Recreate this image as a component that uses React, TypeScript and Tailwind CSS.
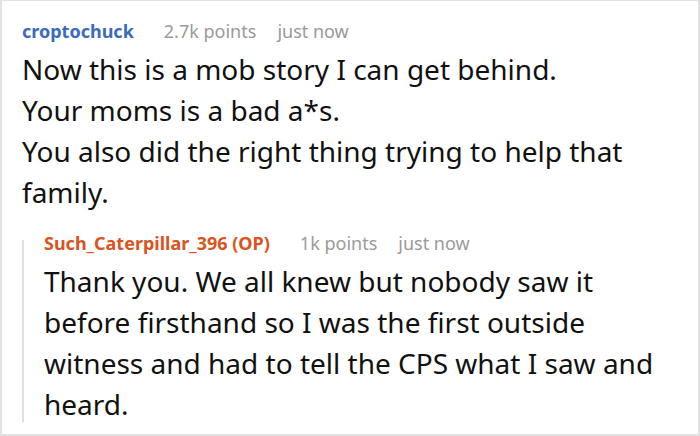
import React from "react";

export default function App() {
  return (
    <div
      className="w-[700px] h-[436px] bg-white border-t border-l-2 border-r-2 border-b-2 border-[#e3e3e3] overflow-hidden"
      style={{ fontFamily: '"Noto Sans", sans-serif' }}
    >
      <div className="pl-[20px] pt-[17px] pr-[20px]">
        <div className="flex items-baseline text-[18px] leading-[26px]">
          <span className="font-bold text-[#3a6cbb]">croptochuck</span>
          <span className="ml-[30px] text-[#9a9a9a]">2.7k points</span>
          <span className="ml-[21px] text-[#9a9a9a]">just now</span>
        </div>
        <div className="mt-[5px] text-[28px] leading-[41px] text-[#111] pr-[20px]">
          <p>Now this is a mob story I can get behind.</p>
          <p>Your moms is a bad a*s.</p>
          <p>You also did the right thing trying to help that family.</p>
        </div>
        <div className="mt-[17px] flex">
          <div className="flex flex-col">
            <div className="h-[10px]" />
            <div className="w-[2px] flex-1 bg-[#e0e0e0] mb-[3px]" />
          </div>
          <div className="pl-[20px] flex-1 pr-[10px]">
            <div className="flex items-baseline text-[18px] leading-[26px]">
              <span className="font-bold text-[#d9541e]">Such_Caterpillar_396 (OP)</span>
              <span className="ml-[30px] text-[#9a9a9a]">1k points</span>
              <span className="ml-[21px] text-[#9a9a9a]">just now</span>
            </div>
            <div className="mt-[5px] text-[28px] leading-[41px] text-[#111]">
              <p>
                Thank you. We all knew but nobody saw it before firsthand so I was the first outside witness and had to tell the CPS what I saw and heard.
              </p>
            </div>
          </div>
        </div>
      </div>
    </div>
  );
}
